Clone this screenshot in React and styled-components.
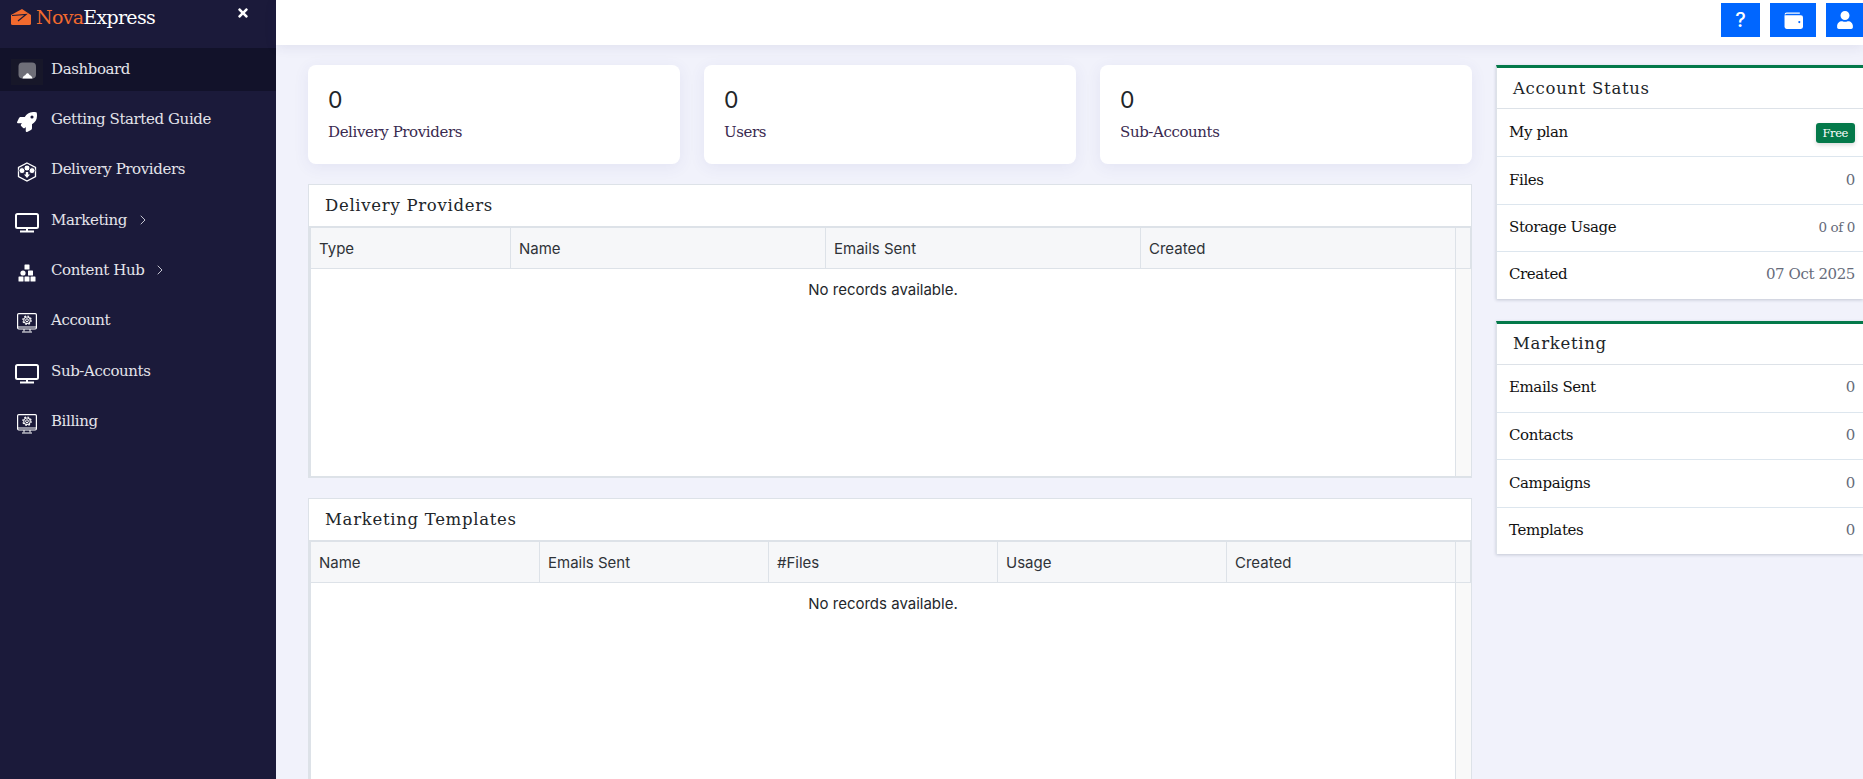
import React from 'react';
import styled, { createGlobalStyle } from 'styled-components';
import { FaRocket, FaUser, FaTimes } from 'react-icons/fa';
import { LuChevronRight } from 'react-icons/lu';

const GlobalStyle = createGlobalStyle`
  html, body {
    margin: 0;
    padding: 0;
    height: 100%;
    overflow: hidden;
    background: #f1f2fb;
  }
  * { box-sizing: border-box; }
`;

const serif = `"DejaVu Serif", "Liberation Serif", serif`;
const sans = `Inter, "Liberation Sans", sans-serif`;

const Layout = styled.div`
  display: flex;
  width: 1863px;
  height: 779px;
  overflow: hidden;
`;

const Sidebar = styled.aside`
  width: 276px;
  flex: none;
  background: #1b1a3a;
  color: #e4e4ea;
  font-family: ${serif};
`;

const Brand = styled.div`
  height: 48px;
  display: flex;
  align-items: flex-start;
  justify-content: space-between;
  padding: 6px 26px 0 11px;
`;

const Logo = styled.div`
  display: flex;
  align-items: center;
  gap: 5px;
  font-size: 19px;
  line-height: 22px;
  letter-spacing: -0.7px;
  color: #fff;
  span { color: #f26a2e; }
`;

const Close = styled.div`
  color: #fff;
  font-size: 14px;
  line-height: 18px;
`;

const Nav = styled.nav`
  display: flex;
  flex-direction: column;
`;

const NavItem = styled.a`
  height: 43px;
  margin-bottom: 7.4px;
  display: flex;
  align-items: center;
  padding-bottom: 2px;
  background: ${(p) => (p.$active ? '#12122a' : 'transparent')};
  font-size: 15px;
  letter-spacing: -0.4px;
`;

const NavIcon = styled.span`
  width: 51px;
  flex: none;
  display: flex;
  justify-content: center;
  padding: 6px 0 0 2px;
  color: #fff;
`;

const Chevron = styled.span`
  display: flex;
  margin-left: 8px;
  color: #c4c4d0;
`;

const Main = styled.div`
  flex: 1;
  min-width: 0;
  display: flex;
  flex-direction: column;
`;

const Topbar = styled.header`
  height: 45px;
  flex: none;
  position: relative;
  z-index: 1;
  background: #fff;
  box-shadow: 0 2px 12px rgba(40, 40, 110, 0.09);
  display: flex;
  justify-content: flex-end;
  align-items: flex-start;
  gap: 10px;
  padding-top: 3px;
`;

const TopButton = styled.button`
  width: ${(p) => p.$w}px;
  height: 34px;
  border: 0;
  padding: 0;
  background: #0066ff;
  color: #fff;
  font-family: ${sans};
  font-size: 20px;
  font-weight: 500;
  display: flex;
  align-items: center;
  justify-content: center;
`;

const Content = styled.div`
  flex: 1;
  display: flex;
  gap: 24px;
  padding: 20px 0 0 32px;
  min-height: 0;
`;

const LeftColumn = styled.div`
  width: 1164px;
  flex: none;
  display: flex;
  flex-direction: column;
`;

const Stats = styled.div`
  display: grid;
  grid-template-columns: repeat(3, 372px);
  gap: 24px;
  margin-bottom: 20px;
`;

const StatCard = styled.div`
  height: 99px;
  background: #fff;
  border-radius: 8px;
  box-shadow: 0 3px 16px rgba(70, 70, 150, 0.08);
  padding: 22px 20px 0;
`;

const StatValue = styled.div`
  font-family: ${sans};
  font-size: 23px;
  line-height: 26px;
  color: #212529;
`;

const StatLabel = styled.div`
  font-family: ${serif};
  font-size: 15px;
  letter-spacing: -0.4px;
  line-height: 20px;
  margin-top: 9px;
  color: #3a2a50;
`;

const TablePanel = styled.section`
  flex: none;
  height: ${(p) => p.$h}px;
  margin-bottom: 20px;
  background: #fff;
  border: 1px solid #dde2e8;
  border-bottom-width: 2px;
  display: flex;
  flex-direction: column;
`;

const PanelTitle = styled.h2`
  margin: 0;
  height: 41px;
  flex: none;
  padding: 0 16px;
  display: flex;
  align-items: center;
  font-family: ${serif};
  font-size: 16.5px;
  font-weight: 400;
  letter-spacing: 0.7px;
  color: #212529;
`;

const TableHead = styled.div`
  flex: none;
  height: 43px;
  display: grid;
  grid-template-columns: ${(p) => p.$cols};
  background: #f6f7f9;
  border-top: 2px solid #dde2e8;
  border-left: 2px solid #dde2e8;
  border-bottom: 1px solid #dde2e8;
`;

const HeadCell = styled.div`
  display: flex;
  align-items: center;
  padding-left: 8px;
  font-family: ${sans};
  font-size: 15px;
  color: #2f3338;
  border-right: 1px solid #dde2e8;
`;

const TableBody = styled.div`
  flex: 1;
  display: grid;
  grid-template-columns: 1fr 16px;
  border-left: 2px solid #dde2e8;
  min-height: 0;
`;

const EmptyRow = styled.div`
  padding-top: 11px;
  text-align: center;
  font-family: ${sans};
  font-size: 15px;
  line-height: 20px;
  color: #24272b;
`;

const Gutter = styled.div`
  background: #f9f9f9;
  border-left: 1px solid #dde2e8;
`;

const RightColumn = styled.div`
  flex: 1;
  min-width: 0;
  display: flex;
  flex-direction: column;
  gap: 22px;
`;

const StatusPanel = styled.section`
  background: #fff;
  border-top: 3px solid #04794a;
  border-left: 1px solid #dde2e8;
  box-shadow: 0 1px 3px rgba(60, 70, 100, 0.25);
`;

const StatusTitle = styled.h3`
  margin: 0;
  height: 41px;
  padding: 0 16px;
  display: flex;
  align-items: center;
  font-family: ${serif};
  font-size: 16.5px;
  font-weight: 400;
  letter-spacing: 0.7px;
  color: #212529;
  border-bottom: 1px solid #dde2e8;
`;

const StatusRow = styled.div`
  height: 47.4px;
  display: flex;
  align-items: center;
  justify-content: space-between;
  padding: 0 8px 2px 12px;
  font-family: ${serif};
  font-size: 15px;
  letter-spacing: -0.4px;
  color: #111;
  & + & { border-top: 1px solid #dde6ee; }
`;

const StatusValue = styled.span`
  color: #666b7a;
  font-size: ${(p) => p.$size || 15}px;
`;

const Badge = styled.span`
  background: #04794a;
  color: #fff;
  font-size: 11.5px;
  line-height: 20px;
  padding: 0 7px;
  margin-top: 2px;
  border-radius: 3px;
  box-shadow: 0 2px 4px rgba(0, 0, 0, 0.15);
`;

const LogoMark = () => (
  <svg width="20" height="16" viewBox="0 0 20 16">
    <path fill="#f26a2e" d="M0 6 L11 0 L20 6 V14.5 Q20 16 18.5 16 H1.5 Q0 16 0 14.5 Z" />
    <path fill="none" stroke="#1b1a3a" strokeWidth="1.2" d="M1 6.5 L15 5.5 L7 12" />
  </svg>
);

const DashIcon = () => (
  <svg width="32" height="26" viewBox="0 0 32 26">
    <rect width="32" height="26" fill="#171729" />
    <rect x="7.5" y="3.5" width="17.5" height="16" rx="4" fill="#6f6f78" />
    <path fill="#fff" d="M11.5 19.5 C12 17 13.5 16.5 14.5 16 C15.5 13.5 17.5 13.5 18.5 16 C20 16.5 21 17.5 21.5 19.5 Z" />
  </svg>
);

const HexIcon = () => (
  <svg width="20" height="20" viewBox="0 0 20 20" fill="none" stroke="#fff">
    <path strokeWidth="1.3" d="M10 1 L18.5 5.5 V14.5 L10 19 L1.5 14.5 V5.5 Z" />
    <g fill="#fff" stroke="#1b1a3a" strokeWidth="0.9">
      <circle cx="5" cy="8.6" r="3" />
      <circle cx="15" cy="8.6" r="3" />
      <circle cx="10" cy="6" r="3" />
    </g>
    <path fill="#fff" stroke="none" d="M8.8 10 H11.2 V12.5 H13 L10 16 L7 12.5 H8.8 Z" />
  </svg>
);

const MonitorIcon = () => (
  <svg width="24" height="20" viewBox="0 0 24 20" fill="none" stroke="#fff">
    <rect x="1" y="1" width="22" height="14" rx="1.5" strokeWidth="2" />
    <path strokeWidth="2" d="M12 15 V18 M5 18.5 H19" />
  </svg>
);

const BlocksIcon = () => (
  <svg width="18" height="18" viewBox="0 0 18 18" fill="#fff">
    <rect x="6.5" y="0.5" width="5" height="5" rx="0.6" />
    <circle cx="5" cy="9" r="2.6" />
    <rect x="10" y="6.5" width="5" height="5" rx="0.6" />
    <rect x="0.5" y="12.5" width="5" height="5" rx="0.6" />
    <rect x="6.5" y="12.5" width="5" height="5" rx="0.6" />
    <rect x="12.5" y="12.5" width="5" height="5" rx="0.6" />
  </svg>
);

const GearMonitorIcon = () => (
  <svg width="20" height="20" viewBox="0 0 20 20" fill="none" stroke="#fff">
    <rect x="0.6" y="0.6" width="18.8" height="15.4" rx="1.2" strokeWidth="1.2" />
    <path strokeWidth="1" d="M1 14 H19 M7 16 V18.5 M13 16 V18.5 M5 19 H15" />
    <circle cx="10" cy="7.2" r="1.4" strokeWidth="1" />
    <circle cx="10" cy="7.2" r="3.2" strokeWidth="1.1" />
    <circle cx="10" cy="7.2" r="4.2" strokeWidth="1.2" strokeDasharray="1.7 1.6" />
  </svg>
);

const WalletIcon = () => (
  <svg width="19" height="17" viewBox="0 0 18 16">
    <path fill="#fff" d="M2.5 0.5 H15 V1.5 H2.5 Q1.5 1.5 1.5 2.2 H0.5 Q0.6 0.5 2.5 0.5 Z" />
    <path fill="#fff" d="M0.5 3 H16 Q18 3 18 5 V14 Q18 16 16 16 H2.5 Q0.5 16 0.5 14 Z" />
    <circle cx="14.5" cy="9.5" r="1" fill="#0066ff" />
  </svg>
);

const navItems = [
  { label: 'Dashboard', icon: <DashIcon />, active: true },
  { label: 'Getting Started Guide', icon: <FaRocket size={20} /> },
  { label: 'Delivery Providers', icon: <HexIcon /> },
  { label: 'Marketing', icon: <MonitorIcon />, more: true },
  { label: 'Content Hub', icon: <BlocksIcon />, more: true },
  { label: 'Account', icon: <GearMonitorIcon /> },
  { label: 'Sub-Accounts', icon: <MonitorIcon /> },
  { label: 'Billing', icon: <GearMonitorIcon /> },
];

const stats = [
  { value: 0, label: 'Delivery Providers' },
  { value: 0, label: 'Users' },
  { value: 0, label: 'Sub-Accounts' },
];

const accountRows = [
  { label: 'Files', value: '0' },
  { label: 'Storage Usage', value: '0 of 0', size: 13.5 },
  { label: 'Created', value: '07 Oct 2025' },
];

const marketingRows = [
  { label: 'Emails Sent', value: '0' },
  { label: 'Contacts', value: '0' },
  { label: 'Campaigns', value: '0' },
  { label: 'Templates', value: '0' },
];

function DataTable({ title, columns, cols, height }) {
  return (
    <TablePanel $h={height}>
      <PanelTitle>{title}</PanelTitle>
      <TableHead $cols={cols}>
        {columns.map((c) => (
          <HeadCell key={c}>{c}</HeadCell>
        ))}
        <HeadCell />
      </TableHead>
      <TableBody>
        <EmptyRow>No records available.</EmptyRow>
        <Gutter />
      </TableBody>
    </TablePanel>
  );
}

export default function App() {
  return (
    <>
      <GlobalStyle />
      <Layout>
        <Sidebar>
          <Brand>
            <Logo>
              <LogoMark />
              <div>
                <span>Nova</span>Express
              </div>
            </Logo>
            <Close>
              <FaTimes />
            </Close>
          </Brand>
          <Nav>
            {navItems.map((item) => (
              <NavItem key={item.label} $active={item.active}>
                <NavIcon>{item.icon}</NavIcon>
                {item.label}
                {item.more && (
                  <Chevron>
                    <LuChevronRight size={16} strokeWidth={1.5} />
                  </Chevron>
                )}
              </NavItem>
            ))}
          </Nav>
        </Sidebar>
        <Main>
          <Topbar>
            <TopButton $w={39}>?</TopButton>
            <TopButton $w={46}>
              <WalletIcon />
            </TopButton>
            <TopButton $w={37}>
              <FaUser size={18} />
            </TopButton>
          </Topbar>
          <Content>
            <LeftColumn>
              <Stats>
                {stats.map((s) => (
                  <StatCard key={s.label}>
                    <StatValue>{s.value}</StatValue>
                    <StatLabel>{s.label}</StatLabel>
                  </StatCard>
                ))}
              </Stats>
              <DataTable
                title="Delivery Providers"
                columns={['Type', 'Name', 'Emails Sent', 'Created']}
                cols="200px 315px 315px 315px 1fr"
                height={294}
              />
              <DataTable
                title="Marketing Templates"
                columns={['Name', 'Emails Sent', '#Files', 'Usage', 'Created']}
                cols="229px 229px 229px 229px 229px 1fr"
                height={400}
              />
            </LeftColumn>
            <RightColumn>
              <StatusPanel>
                <StatusTitle>Account Status</StatusTitle>
                <StatusRow>
                  My plan
                  <Badge>Free</Badge>
                </StatusRow>
                {accountRows.map((r) => (
                  <StatusRow key={r.label}>
                    {r.label}
                    <StatusValue $size={r.size}>{r.value}</StatusValue>
                  </StatusRow>
                ))}
              </StatusPanel>
              <StatusPanel>
                <StatusTitle>Marketing</StatusTitle>
                {marketingRows.map((r) => (
                  <StatusRow key={r.label}>
                    {r.label}
                    <StatusValue>{r.value}</StatusValue>
                  </StatusRow>
                ))}
              </StatusPanel>
            </RightColumn>
          </Content>
        </Main>
      </Layout>
    </>
  );
}
